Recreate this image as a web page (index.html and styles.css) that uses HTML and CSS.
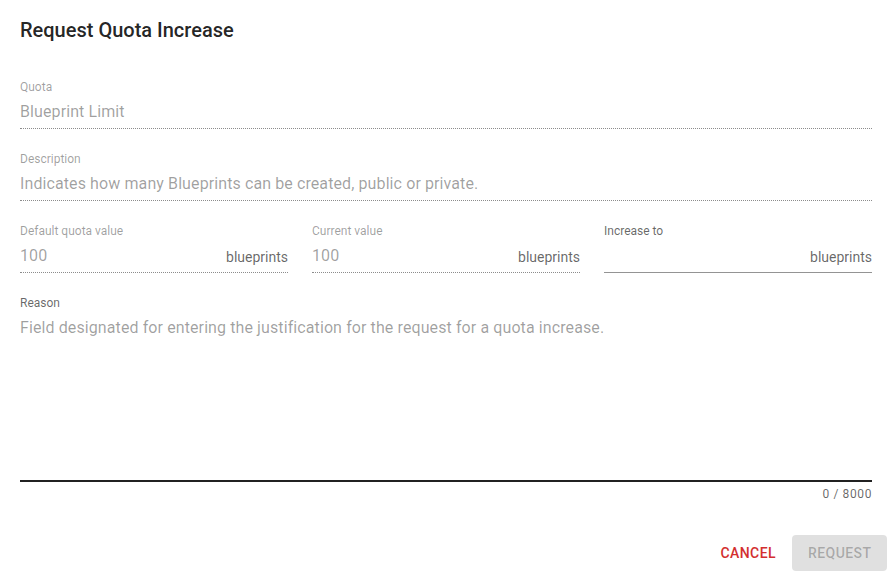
FILE: index.html
```html
<!DOCTYPE html>
<html lang="en">
<head>
<meta charset="utf-8">
<title>Request Quota Increase</title>
<link rel="stylesheet" href="styles.css">
</head>
<body>
<div class="dialog">
  <h2 class="title">Request Quota Increase</h2>
  <div class="content">
    <div class="field disabled">
      <div class="label">Quota</div>
      <div class="control"><span class="value">Blueprint Limit</span></div>
    </div>
    <div class="field disabled">
      <div class="label">Description</div>
      <div class="control"><span class="value">Indicates how many Blueprints can be created, public or private.</span></div>
    </div>
    <div class="row">
      <div class="field disabled">
        <div class="label">Default quota value</div>
        <div class="control"><span class="value">100</span><span class="suffix">blueprints</span></div>
      </div>
      <div class="field disabled">
        <div class="label">Current value</div>
        <div class="control"><span class="value">100</span><span class="suffix">blueprints</span></div>
      </div>
      <div class="field active">
        <div class="label">Increase to</div>
        <div class="control"><span class="value"></span><span class="suffix">blueprints</span></div>
      </div>
    </div>
    <div class="field textarea">
      <div class="label">Reason</div>
      <div class="control area"><span class="placeholder">Field designated for entering the justification for the request for a quota increase.</span></div>
      <div class="counter">0 / 8000</div>
    </div>
  </div>
  <div class="actions">
    <button class="btn text">Cancel</button>
    <button class="btn filled" disabled>Request</button>
  </div>
</div>
</body>
</html>
```

FILE: styles.css
```css
* { box-sizing: border-box; }
html, body { margin: 0; padding: 0; background: #fff; }
body {
  font-family: Roboto, "Liberation Sans", Arial, sans-serif;
  color: rgba(0,0,0,.87);
  width: 895px;
  height: 577px;
  overflow: hidden;
}
.dialog { display: flex; flex-direction: column; }
.title {
  margin: 0;
  padding: 14px 20px 0;
  font-size: 20px;
  line-height: 32px;
  font-weight: 500;
  letter-spacing: 0;
  color: rgba(0,0,0,.87);
}
.content {
  padding: 33px 23px 0 20px;
  display: flex;
  flex-direction: column;
  gap: 22px;
}
.row {
  display: grid;
  grid-template-columns: 1fr 1fr 1fr;
  gap: 24px;
}
.label {
  font-size: 12px;
  line-height: 16px;
  height: 16px;
  margin-bottom: 5px;
  color: rgba(0,0,0,.6);
}
.disabled .label { color: rgba(0,0,0,.38); }
.control {
  display: flex;
  align-items: center;
  height: 29px;
  padding-bottom: 4px;
  border-bottom: 1px solid rgba(0,0,0,.42);
  font-size: 16px;
  line-height: 24px;
  letter-spacing: .1px;
}
.disabled .control { border-bottom: 1px dotted rgba(0,0,0,.45); }
.value { flex: 1; color: rgba(0,0,0,.38); }
.suffix {
  font-size: 14px;
  letter-spacing: 0;
  color: rgba(0,0,0,.6);
  padding-top: 2px;
}
.control.area {
  height: 166px;
  align-items: flex-start;
  border-bottom: 2px solid rgba(0,0,0,.87);
  padding-bottom: 0;
}
.placeholder { color: rgba(0,0,0,.38); }
.counter {
  text-align: right;
  font-size: 12px;
  line-height: 16px;
  margin-top: 4px;
  letter-spacing: .05em;
  color: rgba(0,0,0,.6);
}
.actions {
  display: flex;
  justify-content: flex-end;
  align-items: center;
  gap: 8px;
  padding: 33px 8px 0;
}
.btn {
  font-family: inherit;
  font-size: 14px;
  font-weight: 500;
  letter-spacing: .03em;
  text-transform: uppercase;
  height: 36px;
  padding: 0 16px;
  border: none;
  border-radius: 4px;
  background: transparent;
  cursor: pointer;
}
.btn.text { color: #d32f2f; padding: 0 8px; }
.btn.filled {
  background: rgba(0,0,0,.12);
  color: rgba(0,0,0,.26);
  width: 95px;
  cursor: default;
}
```
